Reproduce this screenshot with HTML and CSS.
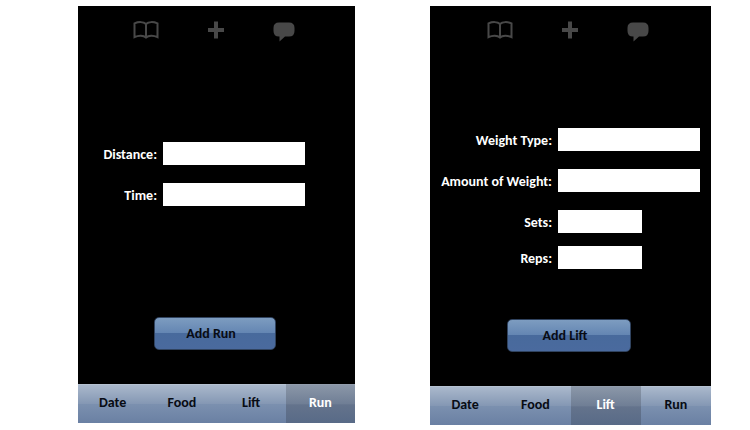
FILE: index.html
```html
<!DOCTYPE html>
<html lang="en">
<head>
<meta charset="utf-8">
<title>Workout log</title>
<link rel="stylesheet" href="styles.css">
</head>
<body>
<svg class="sprite" aria-hidden="true">
  <symbol id="book" viewBox="0 0 26 18">
    <path d="M13 3C10.500 .6 5.500 .6 1.500 2.400V16.200C5.500 14.200 10.500 14.200 13 16.600C15.500 14.200 20.500 14.200 24.500 16.200V2.400C20.500 .6 15.500 .6 13 3ZM13 3V16.500" fill="none" stroke="#484848" stroke-width="2"/>
  </symbol>
  <symbol id="plus" viewBox="0 0 16 18">
    <path d="M6 .5h4v6.500h6v4h-6v6.500H6V11H0V7h6z" fill="#484848"/>
  </symbol>
  <symbol id="bubble" viewBox="0 0 22 20">
    <path d="M6 .5h10Q21.500 .5 21.500 6v3Q21.500 14.500 16 14.500H12L6.500 19.500V14.500H6Q.5 14.500 .5 9V6Q.5 .5 6 .5z" fill="#484848"/>
  </symbol>
</svg>
<main class="screens">
  <section class="phone">
    <header class="toolbar">
      <svg class="icon-book"><use href="#book"/></svg>
      <svg class="icon-plus"><use href="#plus"/></svg>
      <svg class="icon-bubble"><use href="#bubble"/></svg>
    </header>
    <form class="form form-run">
      <div class="fields">
        <label for="distance">Distance:</label><input id="distance" type="text">
        <label for="time">Time:</label><input id="time" type="text">
      </div>
      <button class="submit" type="button">Add Run</button>
    </form>
    <nav class="tabs">
      <a href="#date">Date</a><a href="#food">Food</a><a href="#lift">Lift</a><a class="active" href="#run">Run</a>
    </nav>
  </section>
  <section class="phone">
    <header class="toolbar">
      <svg class="icon-book"><use href="#book"/></svg>
      <svg class="icon-plus"><use href="#plus"/></svg>
      <svg class="icon-bubble"><use href="#bubble"/></svg>
    </header>
    <form class="form form-lift">
      <div class="fields">
        <label for="type">Weight Type:</label><input id="type" type="text">
        <label for="amount">Amount of Weight:</label><input id="amount" type="text">
      </div>
      <div class="fields counts">
        <label for="sets">Sets:</label><input id="sets" type="text">
        <label for="reps">Reps:</label><input id="reps" type="text">
      </div>
      <button class="submit" type="button">Add Lift</button>
    </form>
    <nav class="tabs">
      <a href="#date">Date</a><a href="#food">Food</a><a class="active" href="#lift">Lift</a><a href="#run">Run</a>
    </nav>
  </section>
</main>
</body>
</html>
```
FILE: styles.css
```css
* { box-sizing: border-box; }

body {
  margin: 0;
  background: #fff;
  font: bold 14px/16px Carlito, Lato, sans-serif;
}

.sprite { display: none; }

.screens {
  display: grid;
  grid-template-columns: 277fr 281fr;
  align-items: start;
  gap: 75px;
  padding: 6px 39px 0 78px;
}

.phone {
  background: #000;
  color: #fff;
}

.toolbar {
  display: flex;
  justify-content: center;
  gap: 49px;
  padding: 15px 5px 0 0;
}

.icon-book { width: 26px; height: 18px; }
.icon-plus { width: 16px; height: 18px; }
.icon-bubble { width: 22px; height: 20px; margin-top: 1px; }

.form {
  display: flex;
  flex-direction: column;
}

.fields {
  display: grid;
  grid-template-columns: 1fr 142px;
  align-items: center;
  gap: 18px 6px;
}

.form-run .fields { padding: 100px 50px 111px 0; }
.form-lift .fields { padding: 86px 11px 0 0; }
.form-lift .counts { padding: 18px 11px 50px 0; row-gap: 13px; }

label {
  text-align: right;
  padding-top: 2px;
}

input {
  width: 100%;
  height: 23px;
  padding: 0 4px;
  border: 0;
  border-radius: 0;
  background: #fff;
  font: inherit;
}

.counts input { width: 84px; }

.submit {
  align-self: center;
  width: 44%;
  height: 33px;
  margin: 0 3px 34px 0;
  padding: 0 8px 0 0;
  border: 1px solid #30435f;
  border-radius: 5px;
  background: linear-gradient(#7d9cc0, #6385b2 50%, #486a9c 50%, #4a6a9e);
  color: #080c14;
  font: inherit;
}

.tabs {
  display: grid;
  grid-template-columns: repeat(4, 1fr);
  background: linear-gradient(#acbacd, #8598b4 50%, #7b90af 52%, #6a80a3);
}

.tabs a {
  padding: 10px 0 12px;
  border-top: 1px solid #b5c1d1;
  color: #080c14;
  text-align: center;
  text-decoration: none;
}

.tabs .active {
  border-top-color: #929dac;
  background: linear-gradient(#8b97a8, #6f7e95 50%, #64738c 52%, #586a87);
  color: #fff;
}
```
